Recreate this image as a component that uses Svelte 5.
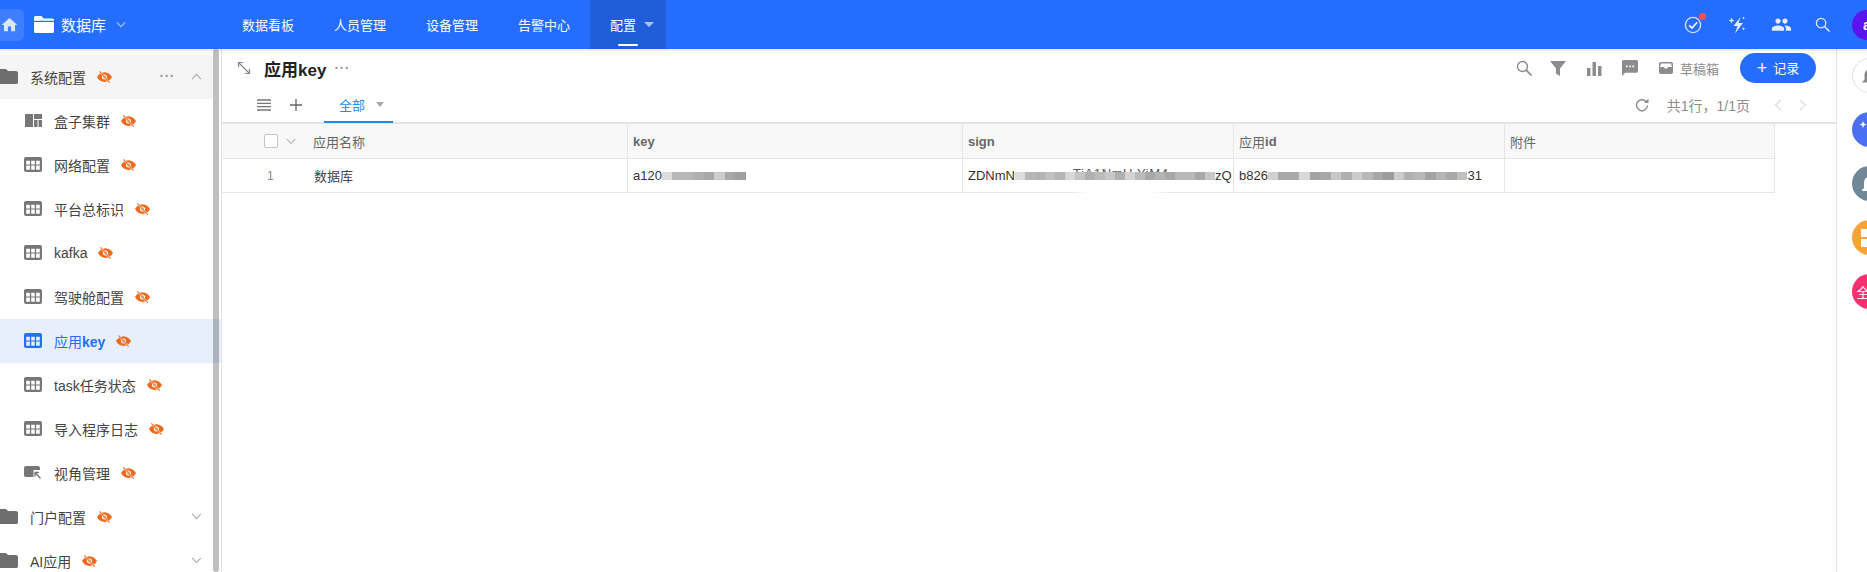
<script>
  const nav = ["数据看板", "人员管理", "设备管理", "告警中心"];
  const menu = [
    { label: "盒子集群", icon: "board" },
    { label: "网络配置", icon: "grid" },
    { label: "平台总标识", icon: "grid" },
    { label: "kafka", icon: "grid" },
    { label: "驾驶舱配置", icon: "grid" },
    { label: "应用", bold: "key", icon: "grid", active: true },
    { label: "task任务状态", icon: "grid" },
    { label: "导入程序日志", icon: "grid" },
    { label: "视角管理", icon: "view" }
  ];
  const columns = [
    { bold: "key" },
    { bold: "sign" },
    { text: "应用", bold: "id" },
    { text: "附件" }
  ];

  // greys of the blurred-out blocks in the data row
  const keyBlur = ["#dcdcdc", "#b8b8b8", "#b8b8b8", "#b0b0b0", "#a8a8a8", "#cccccc", "#a8a8a8", "#a0a0a0"];
  const signBlur = ["#dcdcdc", "#b8b8b8", "#b4b4b4", "#c0c0c0", "#b4b4b4", "#d8d8d8", "#c4c4c4", "#b0b0b0", "#bcbcbc", "#c8c8c8", "#b0b0b0", "#d4d4d4", "#bcbcbc", "#a8a8a8", "#b4b4b4", "#a8a8a8", "#b8b8b8", "#b8b8b8", "#a8a8a8", "#c8c8c8"];
  const idBlur = ["#d0d0d0", "#a8a8a8", "#a8a8a8", "#d8d8d8", "#a4a4a4", "#a8a8a8", "#c8c8c8", "#b0b0b0", "#cccccc", "#b8b8b8", "#a8a8a8", "#9c9c9c", "#cccccc", "#b0b0b0", "#b8b8b8", "#a4a4a4", "#b4b4b4", "#a8a8a8", "#c0c0c0"];

  const rail = ["white", "blue", "slate", "orange", "pink"];
</script>

{#snippet eye()}
  <svg class="eye" viewBox="0 0 16 12" width="15" height="12">
    <path fill="#ee6a1c" d="M8 .8C4.300 .8 1.500 3.100 0 6c1.500 2.900 4.300 5.200 8 5.200s6.500-2.300 8-5.200C14.500 3.100 11.700 .8 8 .8zm0 7.900A2.700 2.700 0 1 1 8 3.300a2.700 2.700 0 0 1 0 5.400z" />
    <circle cx="8" cy="6" r="1.500" fill="#ee6a1c" />
    <path stroke="#fff" stroke-width="1.800" d="M2.500 0l11 12" />
    <path stroke="#ee6a1c" stroke-width="1.100" d="M2.500 0l11 12" />
  </svg>
{/snippet}

{#snippet folder(cls)}
  <svg class={cls} viewBox="2 4 20 16" preserveAspectRatio="none">
    <path fill="currentColor" d="M10 4H4c-1.100 0-2 .9-2 2v12c0 1.100.9 2 2 2h16c1.100 0 2-.9 2-2V8c0-1.100-.9-2-2-2h-8l-2-2z" />
  </svg>
{/snippet}

{#snippet menuIcon(kind, color)}
  <svg class="micon" viewBox="0 0 18 15" width="18" height="15">
    {#if kind === "grid"}
      <path fill={color} fill-rule="evenodd" d="M2 0h14a2 2 0 0 1 2 2v11a2 2 0 0 1-2 2H2a2 2 0 0 1-2-2V2a2 2 0 0 1 2-2zM2.200 3.700v3.700h3.700V3.700zm5 0v3.700h3.600V3.700zm4.900 0v3.700h3.700V3.700zM2.200 8.600v4.200h3.700V8.600zm5 0v4.200h3.600V8.600zm4.900 0v4.200h3.700V8.600z" />
    {:else if kind === "board"}
      <path fill={color} d="M1 1h8v13H1zM10 1h8v5h-8zM10 7h3.500v7H10zM14.500 7H18v7h-3.500z" />
    {:else}
      <path fill={color} d="M2 1h12c1 0 2 .8 2 2v2H9.500v7H2a2 2 0 0 1-2-2V3a2 2 0 0 1 2-2z" />
      <path fill="none" stroke={color} stroke-width="1.300" d="M11 11.500V7.500h4M11.500 8l5 5.500" />
    {/if}
  </svg>
{/snippet}

{#snippet mosaic(list, w)}
  <span class="mosaic">
    {#each list as c}
      <i style="background:{c};width:{w}px"></i>
    {/each}
  </span>
{/snippet}

<div class="page">
  <header class="top">
    <div class="home">
      <svg viewBox="0 0 24 24" width="20" height="20"><path fill="#dbe7ff" d="M10 20v-6h4v6h5v-8h3L12 3 2 12h3v8z" /></svg>
    </div>
    <div class="brand">
      <svg class="brand-folder" viewBox="0 0 20 17">
        <path fill="#fff" d="M1.500 0h6l2 2.500h9A1.500 1.500 0 0 1 20 4v.8H0V1.500A1.500 1.500 0 0 1 1.500 0zM0 6h20v9.500a1.500 1.500 0 0 1-1.500 1.500h-17A1.500 1.500 0 0 1 0 15.500z" />
      </svg>
      <span class="brand-name">数据库</span>
      <svg viewBox="0 0 12 8" width="10" height="7"><path fill="none" stroke="#a9c5ff" stroke-width="1.400" d="M1 1.500l5 5 5-5" /></svg>
    </div>
    <nav class="nav">
      {#each nav as item}
        <span class="nav-item">{item}</span>
      {/each}
      <span class="nav-item on">
        配置
        <i class="caret light"></i>
        <i class="underline"></i>
      </span>
    </nav>
    <div class="top-right">
      <span class="tool">
        <svg viewBox="0 0 18 18" width="18" height="18">
          <circle cx="9" cy="9" r="7.600" fill="none" stroke="#cfe0ff" stroke-width="1.400" />
          <path fill="none" stroke="#fff" stroke-width="1.600" d="M5.200 9.300l2.800 2.700 5.200-5.800" />
        </svg>
        <i class="dot"></i>
      </span>
      <span class="tool">
        <svg viewBox="0 0 18 18" width="18" height="18" fill="#e4edff">
          <path d="M12.500 1L5.500 10h4L7 17.500l8-10.500h-4.500z" />
          <path d="M3.500 1.500l.8 2.200 2.200.8-2.200.8-.8 2.200-.8-2.200L.5 4.500l2.200-.8zM15.500 .5l.4 1.100 1.100.4-1.100.4-.4 1.100-.4-1.100L14 2l1.100-.4zM15.500 11l.5 1.300 1.300.5-1.300.5-.5 1.300-.5-1.300-1.300-.5 1.300-.5z" />
        </svg>
      </span>
      <span class="tool">
        <svg viewBox="0 0 24 24" width="21" height="21"><path fill="#e4edff" d="M16 11c1.660 0 2.990-1.340 2.990-3S17.660 5 16 5c-1.660 0-3 1.340-3 3s1.340 3 3 3zm-8 0c1.660 0 2.990-1.340 2.990-3S9.660 5 8 5C6.340 5 5 6.340 5 8s1.340 3 3 3zm0 2c-2.330 0-7 1.170-7 3.500V19h14v-2.500c0-2.330-4.670-3.500-7-3.500zm8 0c-.29 0-.62.02-.97.05 1.160.84 1.970 1.970 1.970 3.450V19h6v-2.500c0-2.330-4.670-3.500-7-3.500z" /></svg>
      </span>
      <span class="tool last">
        <svg viewBox="0 0 16 16" width="15" height="15"><circle cx="6.500" cy="6.500" r="5" fill="none" stroke="#e4edff" stroke-width="1.300" /><path stroke="#e4edff" stroke-width="1.500" d="M10.200 10.200L15.500 15.500" /></svg>
      </span>
      <span class="avatar">a</span>
    </div>
  </header>

  <div class="body">
    <aside class="side">
      <div class="scrollbar"></div>
      <div class="group open">
        {@render folder("gfolder")}
        <span>系统配置</span>
        {@render eye()}
        <span class="spacer"></span>
        <span class="more">···</span>
        <svg class="chev" viewBox="0 0 12 8" width="11" height="7"><path fill="none" stroke="#aaa" stroke-width="1.200" d="M1 7l5-5.500L11 7" /></svg>
      </div>
      {#each menu as m}
        <div class="row" class:active={m.active}>
          {@render menuIcon(m.icon, m.active ? "#246dff" : "#777")}
          <span>{m.label}{#if m.bold}<b>{m.bold}</b>{/if}</span>
          {@render eye()}
        </div>
      {/each}
      <div class="group">
        {@render folder("gfolder")}
        <span>门户配置</span>
        {@render eye()}
        <span class="spacer"></span>
        <svg class="chev" viewBox="0 0 12 8" width="11" height="7"><path fill="none" stroke="#aaa" stroke-width="1.200" d="M1 1l5 5.500L11 1" /></svg>
      </div>
      <div class="group">
        {@render folder("gfolder")}
        <span>AI应用</span>
        {@render eye()}
        <span class="spacer"></span>
        <svg class="chev" viewBox="0 0 12 8" width="11" height="7"><path fill="none" stroke="#aaa" stroke-width="1.200" d="M1 1l5 5.500L11 1" /></svg>
      </div>
    </aside>

    <main class="main">
      <div class="titlebar">
        <svg class="expand" viewBox="0 0 14 14" width="14" height="14"><path fill="none" stroke="#888" stroke-width="1.200" d="M1.500 1.500l11 11M1.500 6V1.500H6M8 12.500h4.500V8" /></svg>
        <h1>应用key</h1>
        <span class="more title-more">···</span>
        <span class="spacer"></span>
        <svg class="tb-search" viewBox="0 0 16 16" width="16" height="16"><circle cx="6.500" cy="6.500" r="5" fill="none" stroke="#8c8c8c" stroke-width="1.400" /><path stroke="#8c8c8c" stroke-width="1.700" d="M10.200 10.200L15.500 15.500" /></svg>
        <svg class="tb" viewBox="0 0 16 16" width="16" height="16"><path fill="#8c8c8c" d="M0 1h16L10 8.500V16l-4-2.500v-5z" /></svg>
        <svg class="tb chart" viewBox="0 0 15 15" width="15" height="15"><path fill="#8c8c8c" d="M0 7h3.500v8H0zM5.500 1H9v14H5.500zM11 5h3.500v10H11z" /></svg>
        <svg class="tb" viewBox="2 2 20 20" width="16" height="16"><path fill="#8c8c8c" d="M20 2H4c-1.100 0-1.990.9-1.990 2L2 22l4-4h14c1.100 0 2-.9 2-2V4c0-1.100-.9-2-2-2zM9 11H7V9h2v2zm4 0h-2V9h2v2zm4 0h-2V9h2v2z" /></svg>
        <svg class="tb inbox" viewBox="0 0 14 12" width="14" height="12"><path fill="#8c8c8c" d="M2 0h10a2 2 0 0 1 2 2v8a2 2 0 0 1-2 2H2a2 2 0 0 1-2-2V2a2 2 0 0 1 2-2z" /><path fill="#fff" d="M2 1.500h10L13 5H9.500L7 7 4.500 5H1z" /></svg>
        <span class="draft">草稿箱</span>
        <button class="add"><span class="plus">+</span><span class="add-label">记录</span></button>
      </div>

      <div class="tabbar">
        <svg class="lines" viewBox="0 0 14 12" width="14" height="12"><path stroke="#777" stroke-width="1.300" d="M0 1h14M0 4.300h14M0 7.600h14M0 11h14" /></svg>
        <svg class="tabplus" viewBox="0 0 12 12" width="12" height="12"><path stroke="#666" stroke-width="1.300" d="M6 0v12M0 6h12" /></svg>
        <div class="tab">全部<i class="caret grey"></i></div>
        <span class="spacer"></span>
        <svg class="refresh" viewBox="0 0 14 14" width="14" height="14"><path fill="none" stroke="#8c8c8c" stroke-width="1.400" d="M11.800 4.500A5.500 5.500 0 1 0 12.500 7.500" /><path fill="#8c8c8c" d="M9 5h4.500V.5z" /></svg>
        <span class="pages">共1行，1/1页</span>
        <svg class="pg" viewBox="0 0 8 12" width="8" height="12"><path fill="none" stroke="#ddd" stroke-width="1.300" d="M7 1L1.500 6 7 11" /></svg>
        <svg class="pg" viewBox="0 0 8 12" width="8" height="12"><path fill="none" stroke="#ddd" stroke-width="1.300" d="M1 1l5.500 5L1 11" /></svg>
      </div>

      <div class="table">
        <div class="tr head">
          <div class="td first">
            <i class="check"></i>
            <svg viewBox="0 0 12 8" width="10" height="7"><path fill="none" stroke="#999" stroke-width="1.200" d="M1 1l5 5.500L11 1" /></svg>
            <span class="name">应用名称</span>
          </div>
          {#each columns as col}
            <div class="td">{col.text ?? ""}{#if col.bold}<b>{col.bold}</b>{/if}</div>
          {/each}
        </div>
        <div class="tr data">
          <div class="td first">
            <span class="num">1</span>
            <span class="name">数据库</span>
          </div>
          <div class="td">a120{@render mosaic(keyBlur, 10.500)}</div>
          <div class="td sign">
            ZDNmN{@render mosaic(signBlur, 10)}zQ
            <span class="peek">TiA1NmU YiM4</span>
          </div>
          <div class="td">b826{@render mosaic(idBlur, 10.500)}31</div>
          <div class="td"></div>
          <i class="smudge"></i>
        </div>
      </div>
    </main>

    <aside class="rail">
      {#each rail as r}
        <span class="ball {r}">
          {#if r === "white"}
            <svg viewBox="0 0 24 24" width="22" height="22"><path fill="#888" d="M12 22c1.100 0 2-.9 2-2h-4c0 1.100.9 2 2 2zm6-6v-5c0-3.100-1.600-5.600-4.500-6.300V4a1.500 1.500 0 0 0-3 0v.7C7.600 5.400 6 7.900 6 11v5l-2 2v1h16v-1z" /></svg>
          {:else if r === "blue"}
            <svg viewBox="0 0 24 24" width="24" height="24"><path fill="#fff" d="M16 4l-6 9h4l-2 8 7-10h-4z M5 3l1 2.500L8.500 6.500 6 7.500 5 10 4 7.500 1.500 6.500 4 5.500z" /></svg>
          {:else if r === "slate"}
            <svg viewBox="0 0 24 24" width="24" height="24"><path fill="#fff" d="M12 22c1.100 0 2-.9 2-2h-4c0 1.100.9 2 2 2zm6-6v-5c0-3.100-1.600-5.600-4.500-6.300V4a1.500 1.500 0 0 0-3 0v.7C7.600 5.400 6 7.900 6 11v5l-2 2v1h16v-1z" /></svg>
          {:else if r === "orange"}
            <svg viewBox="0 0 24 24" width="24" height="24"><path fill="#fff" d="M3 3h8v8H3zM13 3h8v8h-8zM3 13h8v8H3zM13 13h8v8h-8z" /></svg>
          {:else}
            全部
          {/if}
        </span>
      {/each}
    </aside>
  </div>
</div>

<style>
  :global(body) {
    margin: 0;
    background: #fff;
    overflow: hidden;
  }

  .page {
    width: 1867px;
    height: 572px;
    overflow: hidden;
    display: flex;
    flex-direction: column;
    font-family: "Liberation Sans", "Noto Sans CJK SC", sans-serif;
    color: #333;
  }

  .spacer {
    flex: 1;
  }

  .caret {
    display: inline-block;
    width: 0;
    height: 0;
    border-left: 5px solid transparent;
    border-right: 5px solid transparent;
    border-top: 5px solid #a9c5ff;
  }

  .caret.grey {
    border-top-color: #aaa;
    border-left-width: 4.500px;
    border-right-width: 4.500px;
  }

  .more {
    color: #999;
    font-size: 14px;
    font-weight: 700;
    line-height: 1;
    letter-spacing: 0.5px;
  }

  /* top bar */
  .top {
    height: 49px;
    flex: none;
    display: flex;
    align-items: center;
    background: #246dff;
    color: #fff;
    box-shadow: 0 1px 3px rgba(0, 0, 0, 0.15);
    position: relative;
    z-index: 2;
  }

  .home {
    width: 24px;
    height: 32px;
    border-radius: 0 6px 6px 0;
    background: #3f7fff;
    display: flex;
    align-items: center;
    justify-content: flex-end;
    padding-right: 6px;
    margin-right: 4px;
    box-sizing: border-box;
  }

  .home svg {
    margin-right: -1px;
  }

  .brand {
    width: 188px;
    display: flex;
    align-items: center;
    padding-left: 6px;
  }

  .brand-folder {
    width: 20px;
    height: 17px;
    margin-right: 7px;
  }

  .brand-name {
    font-size: 15px;
    margin-right: 10px;
  }

  .nav {
    display: flex;
    height: 100%;
  }

  .nav-item {
    width: 92px;
    display: flex;
    align-items: center;
    justify-content: center;
    font-size: 13px;
    position: relative;
  }

  .nav-item.on {
    width: 76px;
    box-sizing: border-box;
    padding-left: 20px;
    justify-content: flex-start;
    background: #1f5ed8;
    gap: 8px;
  }

  .underline {
    position: absolute;
    left: 28px;
    bottom: 3px;
    width: 20px;
    height: 2px;
    border-radius: 1px;
    background: #fff;
  }

  .top-right {
    margin-left: auto;
    display: flex;
    align-items: center;
    margin-right: -15px;
  }

  .tool {
    position: relative;
    width: 44px;
    display: flex;
    justify-content: center;
  }

  .tool.last {
    width: 38px;
  }

  .dot {
    position: absolute;
    top: -3px;
    left: 28px;
    width: 7px;
    height: 7px;
    border-radius: 50%;
    background: #f4514f;
  }

  .avatar {
    width: 30px;
    height: 30px;
    margin-left: 11px;
    border-radius: 50%;
    background: #5b14f0;
    color: #fff;
    display: flex;
    align-items: center;
    justify-content: center;
    font-size: 14px;
    font-weight: 700;
  }

  /* layout below the bar */
  .body {
    flex: 1;
    min-height: 0;
    display: flex;
  }

  .side {
    width: 222px;
    flex: none;
    box-sizing: border-box;
    padding-top: 6px;
    position: relative;
    border-right: 1px solid #e4e4e4;
  }

  .scrollbar {
    position: absolute;
    left: 213px;
    top: 0;
    bottom: 0;
    width: 6px;
    border-radius: 3px;
    background: rgba(0, 0, 0, 0.25);
    z-index: 1;
  }

  .group,
  .row {
    height: 44px;
    display: flex;
    align-items: center;
    font-size: 14px;
    color: #444;
    box-sizing: border-box;
    padding-bottom: 1px;
  }

  .group {
    padding-left: 30px;
    padding-right: 11px;
    position: relative;
    width: 213px;
  }

  .group.open {
    background: #f5f5f5;
  }

  :global(.gfolder) {
    position: absolute;
    left: -2px;
    top: 14px;
    width: 20px;
    height: 15px;
    color: #6e6e6e;
  }

  .group .more {
    margin-right: 16px;
    margin-top: -2px;
  }

  .row {
    padding-left: 24px;
  }

  .row.active {
    background: #e7effd;
    color: #246dff;
  }

  :global(.micon) {
    margin-right: 12px;
    flex: none;
  }

  :global(.eye) {
    margin-left: 11px;
    flex: none;
  }

  /* main area */
  .main {
    flex: 1;
    min-width: 0;
    border-right: 1px solid #e4e4e4;
  }

  .titlebar {
    height: 38px;
    display: flex;
    align-items: center;
    padding: 0 20px 0 15px;
  }

  h1 {
    margin: 0 0 0 13px;
    font-size: 17px;
    font-weight: 700;
    color: #222;
  }

  .title-more {
    margin-left: 8px;
    margin-top: 0;
  }

  .tb-search {
    margin-right: 18px;
  }

  .tb {
    margin-right: 21px;
  }

  .tb.chart {
    margin-right: 20px;
  }

  .tb.inbox {
    margin-right: 7px;
  }

  .draft {
    font-size: 13px;
    color: #8c8c8c;
  }

  .add {
    margin-left: 21px;
    width: 76px;
    height: 30px;
    border: 0;
    border-radius: 15px;
    background: #246dff;
    color: #fff;
    font-family: inherit;
    font-size: 13px;
    display: flex;
    align-items: center;
    justify-content: center;
    gap: 6px;
    padding: 0;
  }

  .plus {
    font-size: 18px;
    line-height: 1;
  }

  .add-label {
    margin-top: -2px;
  }

  .tabbar {
    height: 37px;
    display: flex;
    align-items: center;
    padding: 0 29px 0 35px;
    box-sizing: border-box;
    border-bottom: 2px solid #e4e4e4;
  }

  .tabplus {
    margin-left: 19px;
  }

  .tab {
    margin-left: 22px;
    width: 69px;
    height: 35px;
    box-sizing: border-box;
    border-bottom: 2px solid #1f8cf0;
    margin-bottom: -2px;
    padding-left: 15px;
    display: flex;
    align-items: center;
    gap: 11px;
    color: #1f8cf0;
    font-size: 13px;
  }

  .refresh {
    margin-right: 18px;
  }

  .pages {
    font-size: 14px;
    color: #8c8c8c;
    margin-right: 7px;
  }

  .pg {
    margin-left: 17px;
  }

  .table {
    width: 1553px;
  }

  .tr {
    display: grid;
    grid-template-columns: 405px 335px 271px 271px 270px;
    border-bottom: 1px solid #e6e6e6;
    border-right: 1px solid #e6e6e6;
    font-size: 13px;
    position: relative;
  }

  .head {
    height: 35px;
    box-sizing: border-box;
    background: #f8f8f8;
    color: #666;
  }

  .data {
    height: 34px;
    box-sizing: border-box;
    color: #333;
  }

  .td {
    display: flex;
    align-items: center;
    padding-left: 5px;
    border-left: 1px solid #e6e6e6;
    min-width: 0;
    white-space: nowrap;
    overflow: hidden;
    position: relative;
  }

  .td.first {
    border-left: 0;
    padding-left: 42px;
    color: #666;
  }

  .check {
    width: 12px;
    height: 12px;
    border: 1px solid #c4c4c4;
    border-radius: 2px;
    background: #fff;
    margin-right: 8px;
  }

  .head .name {
    margin-left: 17px;
  }

  .num {
    width: 10px;
    margin-left: 3px;
    color: #888;
    font-size: 12px;
  }

  .data .name {
    margin-left: 37px;
    color: #444;
  }

  .mosaic {
    display: inline-flex;
    height: 8px;
    flex: none;
  }

  .mosaic i {
    display: block;
  }

  /* tops of the letters that stick out above the blurred blocks */
  .peek {
    position: absolute;
    left: 110px;
    top: 10px;
    height: 3px;
    overflow: hidden;
    line-height: 9px;
    color: #555;
    letter-spacing: 0.6px;
  }

  .smudge {
    position: absolute;
    left: 850px;
    width: 100px;
    top: 23px;
    height: 12px;
    background: linear-gradient(to right, rgba(255, 255, 255, 0), #fff 15%, #fff 80%, rgba(255, 255, 255, 0));
  }

  /* right rail */
  .rail {
    width: 30px;
    flex: none;
    padding: 9px 0 0 15px;
    box-sizing: border-box;
    overflow: hidden;
    display: flex;
    flex-direction: column;
    gap: 19px;
  }

  .ball {
    flex: none;
    width: 35px;
    height: 35px;
    border-radius: 50%;
    display: flex;
    align-items: center;
    justify-content: center;
    color: #fff;
    font-size: 13px;
    white-space: nowrap;
    overflow: hidden;
  }

  .ball.white {
    background: #fff;
    border: 1px solid #e0e0e0;
    box-sizing: border-box;
  }

  .ball.blue {
    background: #4a6ff0;
  }

  .ball.slate {
    background: #6f8796;
  }

  .ball.orange {
    background: #f8a33a;
  }

  .ball.pink {
    background: #f5306f;
  }
</style>
